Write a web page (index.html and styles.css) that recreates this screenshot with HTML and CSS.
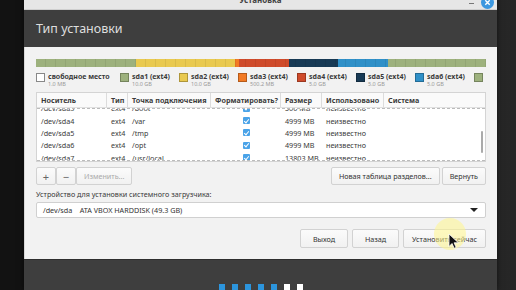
FILE: index.html
```html
<!DOCTYPE html>
<html>
<head>
<meta charset="UTF-8">
<title>Установка</title>
<link rel="stylesheet" href="styles.css">
</head>
<body>
<div class="window">
  <div class="titlebar">
    <span class="wtitle">Установка</span>
    <span class="wmin"></span>
    <span class="wclose">
      <svg width="13" height="13" viewBox="0 0 13 13"><circle cx="6.5" cy="6.5" r="6.5" fill="#3b97df"/><path d="M4.3 4.3l4.4 4.4M8.7 4.3l-4.4 4.4" stroke="#fff" stroke-width="1.4"/></svg>
    </span>
  </div>
  <div class="header">Тип установки</div>
  <div class="content">
    <div class="pbar">
      <div class="seg c1" style="width:100px"></div>
      <div class="seg c2" style="width:99px"></div>
      <div class="seg c3" style="width:4px"></div>
      <div class="seg c4" style="width:50px"></div>
      <div class="seg c5" style="width:49px"></div>
      <div class="seg c6" style="width:50px"></div>
      <div class="seg c1" style="flex:1"></div>
    </div>
    <div class="legend">
      <div class="item wide"><span class="sq free"></span><div><b>свободное место</b><small>1.0 MB</small></div></div>
      <div class="item"><span class="sq c1"></span><div><b>sda1 (ext4)</b><small>10.0 GB</small></div></div>
      <div class="item"><span class="sq c2"></span><div><b>sda2 (ext4)</b><small>10.0 GB</small></div></div>
      <div class="item"><span class="sq c3"></span><div><b>sda3 (ext4)</b><small>500.2 MB</small></div></div>
      <div class="item"><span class="sq c4"></span><div><b>sda4 (ext4)</b><small>5.0 GB</small></div></div>
      <div class="item"><span class="sq c5"></span><div><b>sda5 (ext4)</b><small>5.0 GB</small></div></div>
      <div class="item"><span class="sq c6"></span><div><b>sda6 (ext4)</b><small>5.0 GB</small></div></div>
      <div class="item"><span class="sq c1"></span><div><b>sda7 (ext4)</b><small>13.8 GB</small></div></div>
    </div>
    <div class="table">
      <div class="row thead">
        <span>Носитель</span><span>Тип</span><span>Точка подключения</span><span>Форматировать?</span><span>Размер</span><span>Использовано</span><span>Система</span>
      </div>
      <div class="tbody">
        <div class="rows">
          <div class="row"><span>/dev/sda3</span><span>ext4</span><span>/boot</span><span class="chk"><i></i></span><span>500 MB</span><span>неизвестно</span><span></span></div>
          <div class="row"><span>/dev/sda4</span><span>ext4</span><span>/var</span><span class="chk"><i></i></span><span>4999 MB</span><span>неизвестно</span><span></span></div>
          <div class="row"><span>/dev/sda5</span><span>ext4</span><span>/tmp</span><span class="chk"><i></i></span><span>4999 MB</span><span>неизвестно</span><span></span></div>
          <div class="row"><span>/dev/sda6</span><span>ext4</span><span>/opt</span><span class="chk"><i></i></span><span>4999 MB</span><span>неизвестно</span><span></span></div>
          <div class="row"><span>/dev/sda7</span><span>ext4</span><span>/usr/local</span><span class="chk"><i></i></span><span>13803 MB</span><span>неизвестно</span><span></span></div>
        </div>
        <div class="scrollbar"></div>
      </div>
    </div>
    <div class="tools">
      <div class="group">
        <button class="btn sym">+</button><button class="btn sym">−</button><button class="btn off">Изменить...</button>
      </div>
      <div class="group gap">
        <button class="btn">Новая таблица разделов...</button><button class="btn">Вернуть</button>
      </div>
    </div>
    <div class="label">Устройство для установки системного загрузчика:</div>
    <div class="combo"><span>/dev/sda&nbsp;&nbsp;&nbsp;&nbsp;ATA VBOX HARDDISK (49.3 GB)</span><span class="arrow"></span></div>
    <div class="actions">
      <button class="btn big" style="width:48px">Выход</button>
      <button class="btn big" style="width:47px">Назад</button>
      <button class="btn big" style="width:83px">Установить сейчас</button>
    </div>
  </div>
  <div class="footer">
    <i class="dot on"></i><i class="dot on"></i><i class="dot on"></i><i class="dot on"></i><i class="dot on"></i><i class="dot"></i><i class="dot"></i>
  </div>
</div>
<div class="spot"></div>
<svg class="cursor" width="12" height="16" viewBox="0 0 12 16"><path d="M1 1v12.5l3-3 2.2 4.8 2-0.9-2.1-4.6h4.3z" fill="#111" stroke="#fff" stroke-width="0.8"/></svg>
</body>
</html>
```

FILE: styles.css
```css
html, body {
    margin: 0;
    width: 516px;
    height: 290px;
    overflow: hidden;
}
body {
    position: relative;
    font-family: "Noto Sans", sans-serif;
    background:
        linear-gradient(115deg, transparent 40%, #2a2a2a 41%, transparent 42%),
        linear-gradient(70deg, transparent 60%, #1e1e1e 61%, transparent 62%),
        linear-gradient(90deg, #121212 0, #121212 50%, #2c2c2c 50%, #262626 100%);
}
.window {
    width: 473px;
    height: 302px;
    overflow: hidden;
    margin-left: 24px;
    margin-top: -12px;
    background: #3e3e3e;
    box-shadow: 0 0 6px rgba(0, 0, 0, 0.6);
}
.titlebar {
    height: 21px;
    background: #e6e6e6;
    border-bottom: 1px solid #cfcfcf;
    display: flex;
    align-items: center;
    justify-content: center;
    position: relative;
}
.wtitle {
    font-size: 8px;
    font-weight: bold;
    color: #444;
    margin-top: 2px;
}
.wmin {
    position: absolute;
    left: 445px;
    top: 15px;
    width: 5px;
    height: 1px;
    background: #777;
}
.wclose {
    position: absolute;
    left: 457px;
    top: 8px;
    display: flex;
}
.header {
    height: 37px;
    display: flex;
    align-items: center;
    padding-left: 12px;
    font-size: 12.5px;
    color: #dedede;
}
.content {
    background: #f2f2f2;
    height: 212px;
    padding: 12px 11px 0;
    box-sizing: border-box;
    border-left: 1px solid #d8d8d8;
}
.pbar {
    display: flex;
    height: 8px;
    position: relative;
}
.pbar::after {
    content: "";
    position: absolute;
    inset: 0;
    background: repeating-linear-gradient(90deg, transparent 0, transparent 9px, rgba(0,0,0,0.07) 9px, rgba(0,0,0,0.07) 10px);
}
.seg {
    height: 8px;
}
.c1 { background: #9db17d; }
.c2 { background: #e9c94f; }
.c3 { background: #f27a24; }
.c4 { background: #cf4b2b; }
.c5 { background: #183a55; }
.c6 { background: #2f90c8; }
.legend {
    display: flex;
    gap: 10px;
    margin-top: 5px;
    white-space: nowrap;
    overflow: hidden;
    height: 15px;
}
.item {
    display: flex;
    gap: 3px;
    flex: none;
    width: 49px;
}
.item.wide {
    width: 74px;
}
.sq {
    width: 7px;
    height: 7px;
    margin-top: 0.5px;
    border: 1px solid rgba(0, 0, 0, 0.25);
    flex: none;
}
.sq.free {
    background: #fff;
    border-color: #888;
}
.item b {
    display: block;
    font-size: 7px;
    line-height: 9px;
    color: #3a3a3a;
}
.item small {
    display: block;
    font-size: 5.5px;
    line-height: 6px;
    color: #999;
}
.table {
    margin-top: 5px;
    border: 1px solid #d4d4d4;
    background: #fff;
}
.row {
    display: grid;
    grid-template-columns: 70px 21px 83px 70px 41px 62px 1fr;
    height: 12.4px;
    align-items: center;
    font-size: 7.2px;
    color: #3a3a3a;
    white-space: nowrap;
}
.row span {
    padding-left: 4px;
    overflow: hidden;
}
.thead {
    height: 14px;
    font-weight: bold;
    background: #fafafa;
    border-bottom: 1px solid #e0e0e0;
}
.thead span {
    border-right: 1px solid #dcdcdc;
    height: 14px;
    line-height: 14px;
}
.thead span:last-child {
    border-right: 0;
}
.tbody {
    height: 51px;
    overflow: hidden;
    position: relative;
    border-top: 1px dashed #bbb;
    border-bottom: 1px dashed #bbb;
}
.rows {
    margin-top: -7px;
}
.row span.chk {
    display: flex;
    justify-content: center;
    padding-left: 0;
}
.chk i {
    width: 7px;
    height: 7px;
    border-radius: 1px;
    background: #4aa3e8;
    position: relative;
}
.chk i::after {
    content: "";
    position: absolute;
    left: 2px;
    top: 0.5px;
    width: 2px;
    height: 4px;
    border: solid #fff;
    border-width: 0 1px 1px 0;
    transform: rotate(40deg);
}
.scrollbar {
    position: absolute;
    right: 2px;
    top: 22px;
    width: 2px;
    height: 22px;
    background: #aaa;
    border-radius: 1px;
}
.tools {
    display: flex;
    justify-content: space-between;
    margin-top: 5px;
}
.group {
    display: flex;
}
.group.gap {
    gap: 2px;
}
.btn {
    font-family: "Noto Sans", sans-serif;
    font-size: 7.2px;
    color: #333;
    background: linear-gradient(#fbfbfb, #f1f1f1);
    border: 1px solid #d2d2d2;
    border-radius: 2px;
    height: 18px;
    padding: 0 7px;
    margin: 0;
    white-space: nowrap;
}
.btn.sym {
    width: 20px;
    padding: 0;
    font-size: 11px;
    color: #666;
}
.btn.off {
    width: 56px;
    color: #aaa;
}
.label {
    font-size: 7.2px;
    line-height: 10px;
    color: #3a3a3a;
    margin-top: 4px;
    height: 10px;
}
.combo {
    margin-top: 3px;
    height: 16px;
    box-sizing: border-box;
    background: #fff;
    border: 1px solid #d0d0d0;
    border-radius: 2px;
    display: flex;
    align-items: center;
    justify-content: space-between;
    padding: 0 6px;
    font-size: 7.2px;
    color: #333;
}
.arrow {
    width: 0;
    height: 0;
    border-left: 4px solid transparent;
    border-right: 4px solid transparent;
    border-top: 4px solid #222;
    margin-right: 1px;
}
.actions {
    display: flex;
    justify-content: flex-end;
    gap: 4px;
    margin-top: 11px;
}
.btn.big {
    height: 19px;
    padding: 0;
}
.footer {
    height: 60px;
    border-top: 1px solid #2e2e2e;
    display: flex;
    justify-content: center;
    gap: 7px;
    padding-top: 24px;
    box-sizing: border-box;
}
.dot {
    width: 6px;
    height: 6px;
    background: #fff;
}
.dot.on {
    background: #2c95dd;
}
.spot {
    position: absolute;
    left: 434px;
    top: 218px;
    width: 32px;
    height: 32px;
    border-radius: 50%;
    background: rgba(255, 245, 140, 0.55);
}
.cursor {
    position: absolute;
    left: 448px;
    top: 233px;
}
```
